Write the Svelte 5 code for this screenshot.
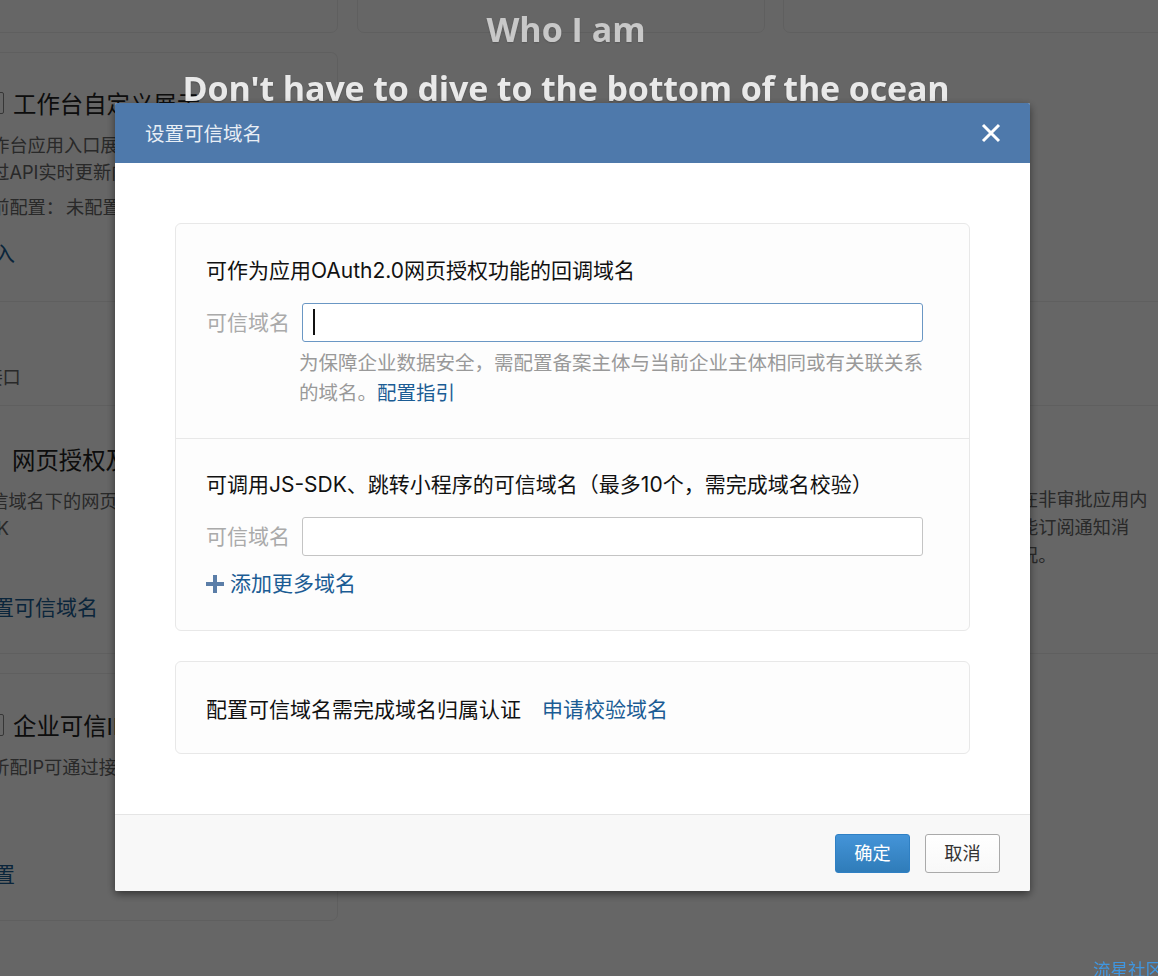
<script lang="ts">
let domain = $state("");
let extra = $state("");
</script>

<div class="page">
	<div class="top-row">
		<div class="top-card"></div>
		<div class="top-card"></div>
		<div class="top-card"></div>
	</div>

	<div class="row first">
		<div class="cell boxed">
			<div class="title"><span class="icon"></span>工作台自定义展示</div>
			<p class="desc">工作台应用入口展示内容<br />通过API实时更新内容</p>
			<p class="desc state">当前配置： 未配置</p>
			<a class="link enter" href="#top">接入</a>
		</div>
	</div>

	<div class="row second">
		<div class="cell">
			<p class="desc api">开放接口</p>
		</div>
	</div>

	<div class="row third">
		<div class="cell">
			<div class="title"><span class="icon blank"></span>网页授权及JS-SDK</div>
			<p class="desc">可信域名下的网页可使用网页授权<br />SDK</p>
			<a class="link auth" href="#top">配置可信域名</a>
		</div>
		<div class="side">
			<p>在非审批应用内能订阅通知消况。</p>
		</div>
	</div>

	<div class="row fourth">
		<div class="cell boxed full">
			<div class="title"><span class="icon"></span>企业可信IP</div>
			<p class="desc">解析配IP可通过接口调用</p>
			<a class="link ip" href="#top">配置</a>
		</div>
	</div>
</div>

<div class="backdrop"></div>

<div class="hero">
	<h1>Who I am</h1>
	<h2>Don't have to dive to the bottom of the ocean</h2>
</div>

<a class="community" href="#top">流星社区</a>

<div class="modal">
	<header class="modal-head">
		<span>设置可信域名</span>
		<svg class="close" width="20" height="20" viewBox="0 0 20 20" aria-label="关闭">
			<path d="M2 2 L18 18 M18 2 L2 18" stroke="#fff" stroke-width="3" fill="none" />
		</svg>
	</header>

	<div class="modal-body">
		<section class="panel">
			<div class="block one">
				<div class="block-title">可作为应用OAuth2.0网页授权功能的回调域名</div>
				<div class="field">
					<label for="d1">可信域名</label>
					<div class="input-wrap">
						<input id="d1" class="focused" bind:value={domain} />
						<span class="caret"></span>
					</div>
				</div>
				<p class="hint">为保障企业数据安全，需配置备案主体与当前企业主体相同或有关联关系的域名。<a href="#top">配置指引</a></p>
			</div>
			<div class="block two">
				<div class="block-title">可调用JS-SDK、跳转小程序的可信域名（最多10个，需完成域名校验）</div>
				<div class="field">
					<label for="d2">可信域名</label>
					<div class="input-wrap">
						<input id="d2" bind:value={extra} />
					</div>
				</div>
				<a class="add" href="#top">
					<svg width="18" height="18" viewBox="0 0 18 18"><path d="M9 0 V18 M0 9 H18" stroke="#5b7ea8" stroke-width="4" fill="none" /></svg>
					添加更多域名
				</a>
			</div>
		</section>

		<section class="panel verify">
			<span>配置可信域名需完成域名归属认证</span>
			<a href="#top">申请校验域名</a>
		</section>
	</div>

	<footer class="modal-foot">
		<button class="btn primary">确定</button>
		<button class="btn">取消</button>
	</footer>
</div>

<style>
	:global(body) {
		margin: 0;
		background: #fff;
		font-family: "Inter", "Noto Sans CJK SC", sans-serif;
		overflow: hidden;
	}

	.page {
		width: 1300px;
		height: 976px;
		margin-left: -60px;
		overflow: hidden;
		color: #333;
	}

	.top-row {
		display: grid;
		grid-template-columns: 398px 408px 420px;
		column-gap: 19px;
		margin-top: -27px;
	}

	.top-row .top-card:nth-child(3) {
		margin-left: -1px;
	}

	.top-card {
		height: 60px;
		border: 1px solid #eee;
		border-radius: 7px;
		box-sizing: border-box;
	}

	.row {
		display: flex;
		box-sizing: border-box;
		border-bottom: 1px solid #eee;
	}

	.first {
		margin-top: 19px;
		height: 249px;
		border: 0;
	}

	.second {
		height: 105px;
		border-top: 1px solid #eee;
	}

	.third {
		height: 248px;
	}

	.fourth {
		margin-top: 19px;
		height: 248px;
		border: 0;
	}

	.cell {
		width: 398px;
		padding-left: 32px;
		box-sizing: border-box;
		flex-shrink: 0;
	}

	.boxed {
		border: 1px solid #eee;
		border-bottom: 0;
		border-radius: 7px 7px 0 0;
	}

	.full {
		border-bottom: 1px solid #eee;
		border-radius: 7px;
	}

	.first .cell {
		padding-top: 35px;
	}

	.third .cell {
		padding-top: 38px;
	}

	.fourth .cell {
		padding-top: 36px;
	}

	.title {
		display: flex;
		align-items: center;
		height: 30px;
		font-size: 23.4px;
		color: #222;
		white-space: nowrap;
	}

	.icon {
		width: 24px;
		height: 22px;
		margin-left: 7px;
		margin-right: 9px;
		box-sizing: border-box;
		border: 1px solid #888;
		border-radius: 2px;
		flex-shrink: 0;
	}

	.icon.blank {
		border: 0;
	}

	.desc {
		margin: 14px 0 0;
		font-size: 18.2px;
		line-height: 27px;
		color: #666;
		white-space: nowrap;
	}

	.desc.state {
		margin-top: 8px;
		word-spacing: -3px;
	}

	.desc.api {
		margin: 62px 0 0 -24px;
	}

	.link {
		display: block;
		font-size: 21px;
		line-height: 30px;
		color: #1b5c94;
		text-decoration: none;
	}

	.enter {
		margin-top: 18px;
	}

	.auth {
		margin-top: 51px;
	}

	.ip {
		margin-top: 79px;
	}

	.side {
		margin-left: 682px;
		padding-top: 79px;
		width: 130px;
		flex-shrink: 0;
	}

	.side p {
		margin: 0;
		font-size: 18.2px;
		line-height: 28px;
		color: #666;
	}

	.backdrop {
		position: fixed;
		inset: 0;
		background: rgba(0, 0, 0, 0.6);
	}

	.hero {
		position: fixed;
		top: 0;
		left: 0;
		width: 1132px;
		text-align: center;
		color: #e9e9e9;
		font-family: "Open Sans", sans-serif;
		text-shadow: 0 1px 2px rgba(0, 0, 0, 0.25);
	}

	.hero h1,
	.hero h2 {
		margin: 0;
		font-size: 34px;
		line-height: 46px;
		font-weight: 700;
		white-space: nowrap;
	}

	.hero h1 {
		margin-top: 6px;
		opacity: 0.75;
	}

	.hero h2 {
		margin-top: 13px;
		letter-spacing: -0.15px;
	}

	.community {
		position: fixed;
		left: 1093px;
		top: 958px;
		font-size: 17.5px;
		line-height: 24px;
		color: #3f96e0;
		text-decoration: none;
		white-space: nowrap;
	}

	.modal {
		position: fixed;
		left: 115px;
		top: 103px;
		width: 915px;
		height: 788px;
		display: flex;
		flex-direction: column;
		background: #fff;
		border-radius: 2px;
		box-shadow: 0 3px 9px rgba(0, 0, 0, 0.5);
		overflow: hidden;
	}

	.modal-head {
		height: 60px;
		padding: 0 30px;
		display: flex;
		align-items: center;
		justify-content: space-between;
		background: #4e79ab;
		color: #e8eef5;
		font-size: 19.5px;
		flex-shrink: 0;
	}

	.modal-head span {
		margin-bottom: 2px;
	}

	.close {
		margin-right: -1px;
	}

	.modal-body {
		flex: 1;
		padding: 60px 60px 0;
		display: flex;
		flex-direction: column;
		gap: 30px;
		background: #fff;
	}

	.panel {
		border: 1px solid #e8e8e8;
		border-radius: 6px;
		background: #fdfdfd;
	}

	.block {
		padding: 32px 46px 0 30px;
	}

	.block.one {
		height: 215px;
		box-sizing: border-box;
		border-bottom: 1px solid #e8e8e8;
	}

	.block.two {
		padding-top: 31px;
		height: 191px;
		box-sizing: border-box;
	}

	.block-title {
		font-size: 21px;
		line-height: 30px;
		color: #111;
		white-space: nowrap;
	}

	.field {
		display: flex;
		align-items: center;
		margin-top: 17px;
	}

	.field label {
		width: 96px;
		flex-shrink: 0;
		font-size: 21px;
		line-height: 36px;
		color: #aaa;
	}

	.input-wrap {
		position: relative;
		flex: 1;
	}

	.input-wrap input {
		display: block;
		width: 100%;
		height: 39px;
		box-sizing: border-box;
		border: 1px solid #c4c4c4;
		border-radius: 3px;
		background: #fff;
		outline: none;
		padding: 0 10px;
	}

	.input-wrap input.focused {
		border-color: #6a97c4;
	}

	.caret {
		position: absolute;
		left: 11px;
		top: 6px;
		width: 1.5px;
		height: 26px;
		background: #111;
	}

	.hint {
		margin: 6px 0 0 93px;
		font-size: 19.5px;
		line-height: 30px;
		color: #999;
	}

	.hint a,
	.add,
	.verify a {
		color: #1b5c94;
		text-decoration: none;
	}

	.add {
		display: flex;
		align-items: center;
		gap: 6px;
		margin-top: 13px;
		font-size: 21px;
		line-height: 30px;
	}

	.verify {
		height: 93px;
		box-sizing: border-box;
		padding: 0 30px;
		display: flex;
		align-items: center;
		gap: 21px;
		font-size: 21px;
		color: #111;
	}

	.modal-foot {
		height: 77px;
		flex-shrink: 0;
		box-sizing: border-box;
		border-top: 1px solid #e5e5e5;
		background: #f8f8f8;
		padding-right: 30px;
		display: flex;
		align-items: center;
		justify-content: flex-end;
		gap: 15px;
	}

	.btn {
		width: 75px;
		height: 39px;
		padding: 0 0 2px;
		border: 1px solid #aaa;
		border-radius: 3px;
		background: linear-gradient(#fff, #f8f8f8);
		color: #333;
		font-family: inherit;
		font-size: 18.2px;
	}

	.btn.primary {
		border-color: #2f80c4;
		background: linear-gradient(#4494d8, #2f7cb9);
		color: #fff;
	}
</style>
